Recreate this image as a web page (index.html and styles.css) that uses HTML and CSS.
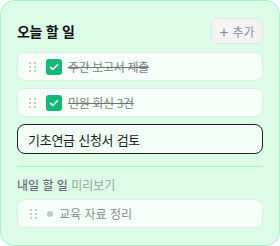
FILE: index.html
```html
<!DOCTYPE html>
<html lang="ko">
<head>
<meta charset="utf-8">
<link rel="stylesheet" href="styles.css">
</head>
<body>
<div class="card">
  <div class="header">
    <h2 class="title">오늘 할 일</h2>
    <button class="add-btn"><span class="plus">+</span> 추가</button>
  </div>
  <ul class="list">
    <li class="item done">
      <span class="handle"><i></i><i></i><i></i><i></i><i></i><i></i></span>
      <span class="check"><svg viewBox="0 0 16 16" width="16" height="16"><path d="M4.5 8.3l2.3 2.2 4.7-4.7" fill="none" stroke="#fff" stroke-width="1.6" stroke-linecap="round" stroke-linejoin="round"/></svg></span>
      <span class="text">주간 보고서 제출</span>
    </li>
    <li class="item done">
      <span class="handle"><i></i><i></i><i></i><i></i><i></i><i></i></span>
      <span class="check"><svg viewBox="0 0 16 16" width="16" height="16"><path d="M4.5 8.3l2.3 2.2 4.7-4.7" fill="none" stroke="#fff" stroke-width="1.6" stroke-linecap="round" stroke-linejoin="round"/></svg></span>
      <span class="text">민원 회신 3건</span>
    </li>
    <li class="item editing">
      <span class="edit-text">기초연금 신청서 검토</span>
    </li>
  </ul>
  <hr class="divider">
  <div class="subtitle"><b>내일 할 일</b> 미리보기</div>
  <ul class="list tomorrow">
    <li class="item preview">
      <span class="handle"><i></i><i></i><i></i><i></i><i></i><i></i></span>
      <span class="dot"></span>
      <span class="text">교육 자료 정리</span>
    </li>
  </ul>
</div>
</body>
</html>
```

FILE: styles.css
```css
* { box-sizing: border-box; }
html, body { margin: 0; padding: 0; }
body {
  width: 280px;
  height: 246px;
  font-family: "Noto Sans CJK KR", "Noto Sans", sans-serif;
  background: #ffffff;
}
.card {
  width: 280px;
  height: 246px;
  background: #dcfce8;
  border: 1px solid #a7f0cc;
  border-radius: 14px;
  padding: 17px 16px 0 16px;
}
.header {
  display: flex;
  justify-content: space-between;
  align-items: center;
  height: 26px;
}
.title {
  margin: 0;
  font-size: 14px;
  font-weight: 700;
  color: #111;
  letter-spacing: -0.02em;
}
.add-btn {
  width: 52px;
  height: 26px;
  border: 1px solid #e2e4e3;
  background: #f2f3f2;
  border-radius: 7px;
  color: #8d8f93;
  font-family: inherit;
  font-size: 12px;
  padding: 0;
  display: flex;
  align-items: center;
  justify-content: center;
  gap: 4px;
}
.plus { font-size: 16px; line-height: 1; font-weight: 400; }
.list {
  list-style: none;
  margin: 8px 0 0 0;
  padding: 0;
  display: flex;
  flex-direction: column;
  gap: 7px;
}
.list.tomorrow { margin-top: 6px; }
.item {
  height: 29px;
  background: #f6fef9;
  border: 1px solid #e0ebe4;
  border-radius: 8px;
  display: flex;
  align-items: center;
  padding-left: 11px;
  font-size: 12px;
}
.handle {
  display: grid;
  grid-template-columns: 2px 2px;
  column-gap: 3px;
  row-gap: 2px;
  width: 7px;
}
.handle i {
  display: block;
  width: 2px;
  height: 2px;
  background: #c9cccc;
}
.check {
  width: 16px;
  height: 16px;
  background: #14b877;
  border-radius: 3px;
  margin-left: 10px;
  display: flex;
}
.done .text {
  margin-left: 6px;
  color: #808388;
  text-decoration: line-through;
  text-decoration-color: #6f7175;
  letter-spacing: -0.03em;
}
.editing {
  height: 30px;
  border: 1.5px solid #222;
  background: #f3fdf7;
  padding-left: 10px;
}
.edit-text {
  font-size: 13px;
  color: #1b1b1b;
  letter-spacing: -0.02em;
}
.divider {
  margin: 12px 0 0 0;
  border: 0;
  height: 1px;
  background: #a7f0cc;
}
.subtitle {
  margin-top: 10px;
  font-size: 12px;
  color: #9aa0a6;
  line-height: 16px;
}
.subtitle b {
  color: #6b7078;
  font-weight: 500;
}
.preview .handle { margin-left: 1px; }
.dot {
  width: 6px;
  height: 6px;
  border-radius: 50%;
  background: #c4c7c9;
  margin-left: 10px;
}
.preview .text {
  margin-left: 6px;
  color: #8a8c90;
}
```
